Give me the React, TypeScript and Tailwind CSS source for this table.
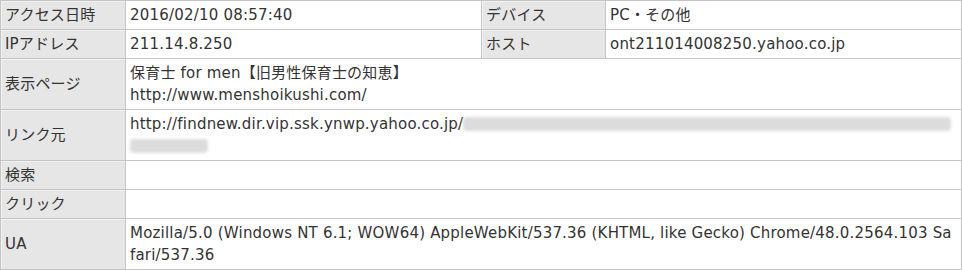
import React from "react";

const font = { fontFamily: '"DejaVu Sans", "Noto Sans CJK JP", sans-serif' };

const Th: React.FC<{ children: React.ReactNode }> = ({ children }) => (
  <div className="flex items-center border-r border-b border-[#c4c4c4] bg-[#e6e6e6] px-1 py-[3px] leading-[22px] shadow-[inset_1px_1px_0_#f2f2f2]">
    {children}
  </div>
);

const Td: React.FC<{ children?: React.ReactNode; wide?: boolean }> = ({ children, wide }) => (
  <div
    className={`border-r border-b border-[#c4c4c4] bg-white px-1 py-[3px] leading-[22px] break-all ${
      wide ? "col-span-3" : ""
    }`}
  >
    {children}
  </div>
);

// blurred-out part of the referrer url
const Smudge: React.FC<{ w: string }> = ({ w }) => (
  <span className={`inline-block h-[14px] ${w} rounded-sm bg-[#dcdcdc] align-[-2px] blur-[1.5px]`} />
);

export default function App() {
  return (
    <div className="w-[962px] bg-white text-[15px] tracking-[0.2px] text-[#333]" style={font}>
      <div className="grid grid-cols-[125px_356px_124px_356px] border-t border-l border-[#c4c4c4]">
        <Th>アクセス日時</Th>
        <Td>2016/02/10 08:57:40</Td>
        <Th>デバイス</Th>
        <Td>PC・その他</Td>

        <Th>IPアドレス</Th>
        <Td>211.14.8.250</Td>
        <Th>ホスト</Th>
        <Td>ont211014008250.yahoo.co.jp</Td>

        <Th>表示ページ</Th>
        <Td wide>
          保育士 for men【旧男性保育士の知恵】
          <br />
          http://www.menshoikushi.com/
        </Td>

        <Th>リンク元</Th>
        <Td wide>
          http://findnew.dir.vip.ssk.ynwp.yahoo.co.jp/
          <Smudge w="w-[488px]" />
          <Smudge w="w-[78px]" />
        </Td>

        <Th>検索</Th>
        <Td wide />

        <Th>クリック</Th>
        <Td wide />

        <Th>UA</Th>
        <Td wide>
          Mozilla/5.0 (Windows NT 6.1; WOW64) AppleWebKit/537.36 (KHTML, like Gecko) Chrome/48.0.2564.103 Safari/537.36
        </Td>
      </div>
    </div>
  );
}
